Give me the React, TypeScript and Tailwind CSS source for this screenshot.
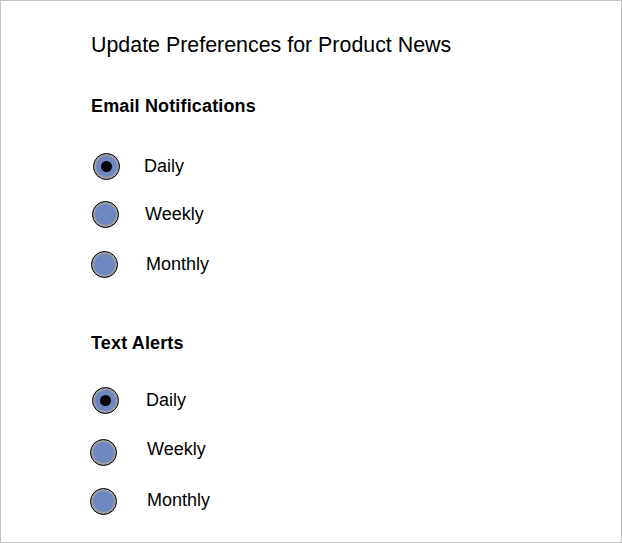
type Option = {
  label: string
  checked?: boolean
  radio: string
  text: string
  row: string
}

const emailOptions: Option[] = [
  { label: 'Daily', checked: true, radio: 'ml-[2px]', text: 'ml-[24px]', row: 'mt-[35px]' },
  { label: 'Weekly', radio: 'ml-[1px]', text: 'ml-[26px]', row: 'mt-[20px]' },
  { label: 'Monthly', radio: 'ml-0', text: 'ml-[28px]', row: 'mt-[22px]' },
]

const textOptions: Option[] = [
  { label: 'Daily', checked: true, radio: 'ml-[1px]', text: 'ml-[27px]', row: 'mt-[32px]' },
  { label: 'Weekly', radio: '-ml-px', text: 'ml-[30px] mb-[6px]', row: 'mt-[24px]' },
  { label: 'Monthly', radio: '-ml-px', text: 'ml-[30px] mb-[2px]', row: 'mt-[21px]' },
]

function Radio({ checked, className }: { checked?: boolean; className: string }) {
  return (
    <div
      className={`flex h-[27px] w-[27px] shrink-0 items-center justify-center rounded-full border border-black bg-[#6e86c1] shadow-[inset_0_0_0_2px_#9e9e9e] ${className}`}
    >
      {checked && <div className="h-[11px] w-[11px] rounded-full bg-black" />}
    </div>
  )
}

function OptionRow({ option }: { option: Option }) {
  return (
    <label className={`flex h-[28px] items-center ${option.row}`}>
      <Radio checked={option.checked} className={option.radio} />
      <span className={`text-[18px] leading-[28px] text-black ${option.text}`}>{option.label}</span>
    </label>
  )
}

export default function App() {
  return (
    <div
      className="flex h-[543px] w-[622px] flex-col border border-[#c3c3c3] bg-white pl-[90px] pt-[32px] text-black"
      style={{ fontFamily: '"Liberation Sans", Arial, sans-serif' }}
    >
      <h1 className="text-[21.4px] leading-[24px] font-normal">Update Preferences for Product News</h1>

      {/* Email */}
      <h2 className="mt-[38px] text-[18px] leading-[22px] font-bold tracking-[0.15px]">Email Notifications</h2>
      {emailOptions.map((o) => (
        <OptionRow key={'e' + o.label} option={o} />
      ))}

      {/* Text */}
      <h2 className="mt-[54px] text-[18px] leading-[22px] font-bold tracking-[0.15px]">Text Alerts</h2>
      {textOptions.map((o) => (
        <OptionRow key={'t' + o.label} option={o} />
      ))}
    </div>
  )
}
